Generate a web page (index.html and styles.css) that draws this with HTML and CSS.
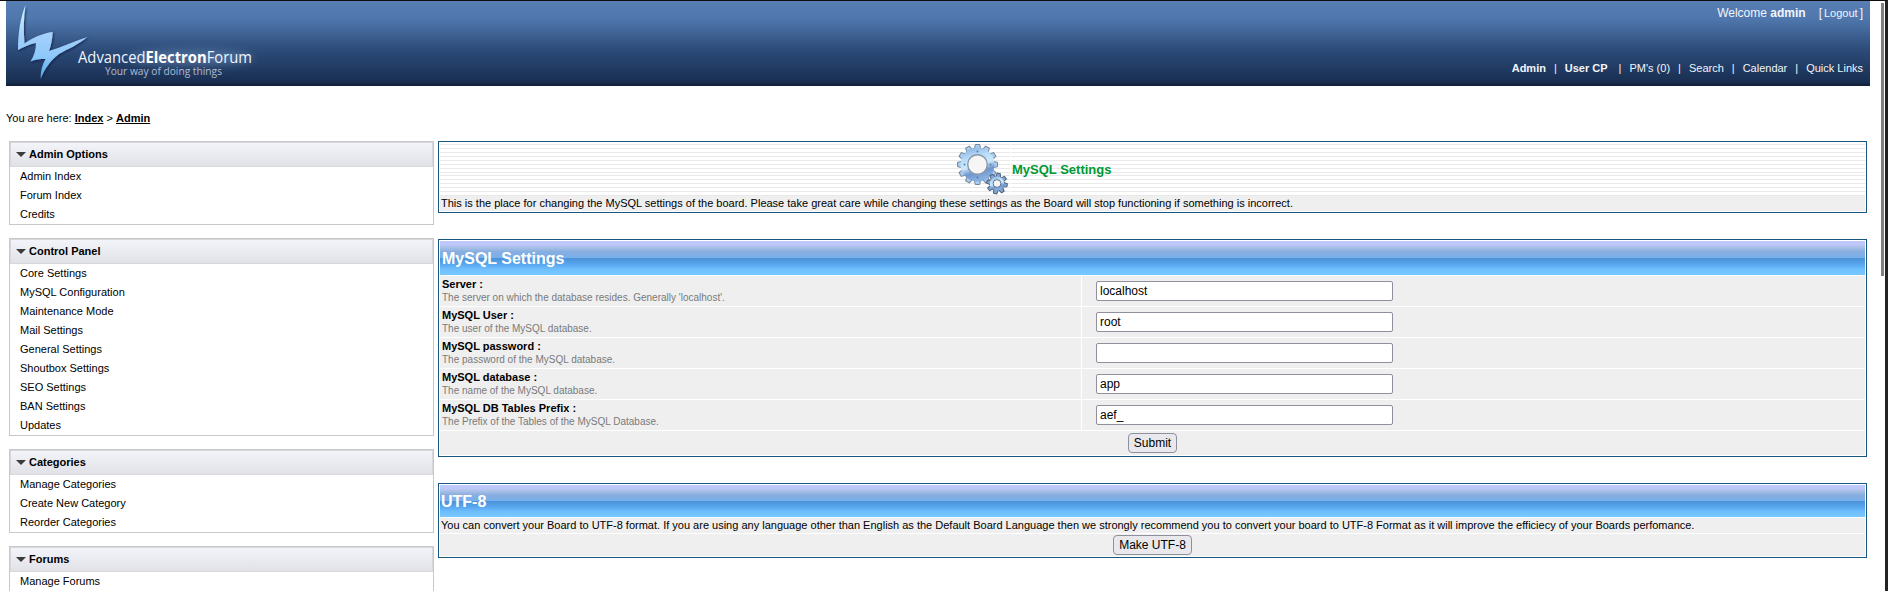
FILE: index.html
```html
<!DOCTYPE html>
<html lang="en">
<head>
<meta charset="utf-8">
<title>MySQL Settings</title>
<link rel="stylesheet" href="styles.css">
</head>
<body>
<div class="page">
<header class="header">
  <svg class="logo" width="260" height="85" viewBox="0 0 260 85">
    <defs>
      <linearGradient id="bolt" x1="0" y1="0" x2="0" y2="1"><stop offset="0" stop-color="#c9ffff"/><stop offset=".4" stop-color="#a5d0fb"/><stop offset=".7" stop-color="#8cc8fa"/><stop offset="1" stop-color="#55a5e6"/></linearGradient>
      <linearGradient id="fade" x1="0" y1="0" x2="0" y2="1"><stop offset="0" stop-color="#fff"/><stop offset="1" stop-color="#000"/></linearGradient>
      <mask id="fademask"><rect x="70" y="63" width="182" height="9" fill="url(#fade)"/></mask>
      <filter id="shade" x="-20%" y="-20%" width="140%" height="140%"><feDropShadow dx="1" dy="1" stdDeviation="1" flood-color="#0a1c40" flood-opacity=".8"/></filter>
      <filter id="glow" x="-10%" y="-100%" width="120%" height="300%"><feGaussianBlur stdDeviation="4"/></filter>
    </defs>
    <path filter="url(#shade)" fill="url(#bolt)" d="M19.500 5C14 19 12 34 12 50C18 47 24 44 30 43C30 50 28 56 24.500 61.500C29 59.500 34 59 39.500 59C36 65 34.500 72 34.700 79C38 70 44 61 53 54C62 49 72 45 81.500 37C69 41 56 47 43 51C45 46 46.500 39 46.700 32C37 33 26 38 18.500 43.500C17.500 30 17.500 18 19.500 5Z"/>
    <ellipse cx="185" cy="58" rx="62" ry="8" fill="#9fc3ee" opacity=".3" filter="url(#glow)"/>
    <text class="logo-name" x="72" y="63" textLength="174" lengthAdjust="spacingAndGlyphs">Advanced<tspan class="logo-bold">Electron</tspan>Forum</text>
    <path d="M76 67.500H246" stroke="#fff" stroke-opacity=".22" stroke-width="7" stroke-dasharray="1.500 3.500 1.500 5" mask="url(#fademask)"/>
    <text class="logo-tag" x="99" y="75" textLength="117" lengthAdjust="spacingAndGlyphs">Your way of doing things</text>
  </svg>
  <div class="account">
    <div class="welcome">Welcome <b>admin</b><span class="logout">[<a>Logout</a>]</span></div>
    <nav class="topnav"><b>Admin</b><i>|</i><b>User CP</b><i class="wide">|</i><span>PM's (0)</span><i>|</i><span>Search</span><i>|</i><span>Calendar</span><i>|</i><span>Quick Links</span></nav>
  </div>
</header>
<div class="crumbs">You are here: <b>Index</b> &gt; <b>Admin</b></div>
<div class="columns">
  <aside class="side">
    <section class="menu"><h3>Admin Options</h3><ul><li>Admin Index</li><li>Forum Index</li><li>Credits</li></ul></section>
    <section class="menu"><h3>Control Panel</h3><ul><li>Core Settings</li><li>MySQL Configuration</li><li>Maintenance Mode</li><li>Mail Settings</li><li>General Settings</li><li>Shoutbox Settings</li><li>SEO Settings</li><li>BAN Settings</li><li>Updates</li></ul></section>
    <section class="menu"><h3>Categories</h3><ul><li>Manage Categories</li><li>Create New Category</li><li>Reorder Categories</li></ul></section>
    <section class="menu last"><h3>Forums</h3><ul><li>Manage Forums</li></ul></section>
  </aside>
  <main class="main">
    <section class="panel intro">
      <div class="banner">
        <div class="banner-icon">
        <svg width="54" height="53" viewBox="0 0 54 53">
          <defs>
            <linearGradient id="steel" x1="0" y1="0" x2=".3" y2="1"><stop offset="0" stop-color="#7fa6d8"/><stop offset=".35" stop-color="#b5dafa"/><stop offset=".6" stop-color="#cdeafd"/><stop offset=".8" stop-color="#6f97d0"/><stop offset="1" stop-color="#86aee0"/></linearGradient>
            <path id="tooth" d="M-3.200 -15L-2.200 -20H2.200L3.200 -15Z"/>
            <path id="cog" d="M-2.400 -6L-1.600 -10.300H1.600L2.400 -6Z"/>
          </defs>
          <g transform="translate(21.500 21.500)" fill="#a9cdf0" stroke="#75879c" stroke-width="1">
            <use href="#tooth"/><use href="#tooth" transform="rotate(30)"/><use href="#tooth" transform="rotate(60)"/><use href="#tooth" transform="rotate(90)"/><use href="#tooth" transform="rotate(120)"/><use href="#tooth" transform="rotate(150)"/><use href="#tooth" transform="rotate(180)"/><use href="#tooth" transform="rotate(210)"/><use href="#tooth" transform="rotate(240)"/><use href="#tooth" transform="rotate(270)"/><use href="#tooth" transform="rotate(300)"/><use href="#tooth" transform="rotate(330)"/>
            <path fill="url(#steel)" stroke="none" fill-rule="evenodd" d="M-17 0A17 17 0 1 1 17 0A17 17 0 1 1 -17 0ZM-9.500 0A9.500 9.500 0 1 0 9.500 0A9.500 9.500 0 1 0 -9.500 0Z"/>
            <circle r="9.800" fill="#f6f6f6" stroke="#8b98a6" stroke-width="1.400"/>
            <g fill="#5e7896" stroke="none"><circle cy="-13" r=".9"/><circle cy="13" r=".9"/><circle cx="-13" r=".9"/><circle cx="13" r=".9"/></g>
          </g>
          <g transform="translate(41 40.500)" fill="#7da4d4" stroke="#4f6379" stroke-width="1">
            <use href="#cog" transform="rotate(10)"/><use href="#cog" transform="rotate(55)"/><use href="#cog" transform="rotate(100)"/><use href="#cog" transform="rotate(145)"/><use href="#cog" transform="rotate(190)"/><use href="#cog" transform="rotate(235)"/><use href="#cog" transform="rotate(280)"/><use href="#cog" transform="rotate(325)"/>
            <circle r="7.200" fill="url(#steel)" stroke="none"/>
            <circle r="3.900" fill="#f6f6f6" stroke="#5d7087"/>
          </g>
        </svg>
        </div>
        <div class="banner-title">MySQL Settings</div>
      </div>
      <p class="note">This is the place for changing the MySQL settings of the board. Please take great care while changing these settings as the Board will stop functioning if something is incorrect.</p>
    </section>
    <section class="panel settings">
      <h2>MySQL Settings</h2>
      <div class="row"><div class="label"><b>Server :</b><small>The server on which the database resides. Generally 'localhost'.</small></div><div class="field"><input type="text" value="localhost"></div></div>
      <div class="row"><div class="label"><b>MySQL User :</b><small>The user of the MySQL database.</small></div><div class="field"><input type="text" value="root"></div></div>
      <div class="row"><div class="label"><b>MySQL password :</b><small>The password of the MySQL database.</small></div><div class="field"><input type="text" value=""></div></div>
      <div class="row"><div class="label"><b>MySQL database :</b><small>The name of the MySQL database.</small></div><div class="field"><input type="text" value="app"></div></div>
      <div class="row"><div class="label"><b>MySQL DB Tables Prefix :</b><small>The Prefix of the Tables of the MySQL Database.</small></div><div class="field"><input type="text" value="aef_"></div></div>
      <div class="actions"><button class="submit">Submit</button></div>
    </section>
    <section class="panel utf">
      <h2>UTF-8</h2>
      <p class="note">You can convert your Board to UTF-8 format. If you are using any language other than English as the Default Board Language then we strongly recommend you to convert your board to UTF-8 Format as it will improve the efficiecy of your Boards perfomance.</p>
      <div class="actions"><button class="convert">Make UTF-8</button></div>
    </section>
  </main>
</div>
</div>
<div class="scroll"><div class="thumb"></div></div>
</body>
</html>
```
FILE: styles.css
```css
* { box-sizing: border-box; }
body { margin: 0; height: 591px; overflow: hidden; display: flex; background: #fff; border-top: 1px solid #0d0d12; border-right: 3px solid #232323; font: 11px/13px "Liberation Sans", Arial, sans-serif; color: #000; }
.page { flex: 1; padding-left: 6px; min-width: 0; }
.scroll { width: 15px; padding: 2px 1px 0 11px; }
.thumb { height: 273px; background: #7f8280; }
.header { height: 85px; display: flex; justify-content: space-between; background: linear-gradient(#587fb4 0, #4f77ad 18px, #2b4a77 50px, #1c3358 76px, #1a2f51 81px, #0e1c36 85px); color: #f2f5fa; }
.logo { overflow: visible; margin-top: -1px; }
.logo-name { font: 16px "Open Sans", sans-serif; fill: #eef5ff; }
.logo-bold { font-weight: 700; fill: #fff; }
.logo-tag { font: 11px "Open Sans", sans-serif; fill: #aebdd3; }
.account { display: flex; flex-direction: column; justify-content: space-between; align-items: flex-end; padding: 5px 7px 11px 0; }
.welcome { font-size: 12px; line-height: 14px; white-space: pre; }
.welcome a { font-size: 11px; padding: 0 2px; }
.logout { margin-left: 13px; }
.topnav { display: flex; }
.topnav i { font-style: normal; margin: 0 8px; }
.topnav .wide { margin-left: 11px; }
.crumbs { height: 55px; padding-top: 26px; }
.crumbs b { text-decoration: underline; }
.columns { display: flex; gap: 4px; padding-left: 3px; }
.side { width: 425px; display: flex; flex-direction: column; gap: 13px; }
.menu { border: 1px solid #c8c8c8; }
.menu h3 { margin: 0; height: 25px; padding: 0 0 1px 5px; border: 1px solid #d8d8da; display: flex; align-items: center; gap: 3px; font-size: 11px; background: linear-gradient(#f3f4f9, #e1e2e7); }
.menu h3::before { content: ""; margin-top: 1px; border: 5px solid transparent; border-top-color: #3b3b3b; border-bottom: 0; }
.menu ul { list-style: none; margin: 0; padding: 0 0 0 10px; }
.menu li { height: 19px; line-height: 18px; }
.menu.last { border-bottom: 0; }
.main { width: 1429px; display: flex; flex-direction: column; gap: 26px; }
.panel { border: 1px solid #175680; padding: 1px; display: flex; flex-direction: column; gap: 1px; }
.banner { height: 52px; display: grid; grid-template-columns: 570px 1fr; gap: 1px; color: #009933; font-weight: bold; font-size: 13px; }
.banner-icon, .banner-title { display: flex; align-items: center; background: repeating-linear-gradient(#fff 0 1px, #e9e9e9 1px 2px, #fff 2px 4px) 0 0 / 100% 31px; }
.banner-icon { justify-content: flex-end; }
.banner-title { padding-left: 1px; }
.note { margin: 0; height: 15px; padding: 0 1px; line-height: 15px; background: #efefef; white-space: nowrap; }
.panel h2 { margin: 0; height: 34px; line-height: 35px; padding-left: 2px; font-size: 16px; color: #fff; background: linear-gradient(#bfc8fa 0 10%, #a6bfe6 20%, #86ade0 32%, #79b0ec 49%, #4b91d6 50%, #58a6ee 68%, #70c0ff 84%, #78c8ff); }
.utf h2 { height: 32px; line-height: 33px; padding-left: 1px; }
.row { height: 30px; display: grid; grid-template-columns: 641px 1fr; gap: 1px; }
.label, .field { background: #efefef; }
.label { padding: 2px; }
.label b, .label small { display: block; line-height: 13px; }
.label small { font-size: 10px; color: #7a7a7a; }
.field { padding: 5px 14px; }
input { display: block; width: 297px; height: 20px; margin: 0; padding: 0 3px; border: 1px solid #8f8f9d; border-radius: 2px; font: 12px "Liberation Sans", Arial, sans-serif; color: #000; background: #fff; }
.actions { height: 24px; display: flex; justify-content: center; align-items: center; background: #efefef; }
.utf .actions { height: 22px; }
button { height: 20px; margin: 0; padding: 0; border: 1px solid #8f8f9d; border-radius: 4px; background: #e9e9ed; font: 12px "Liberation Sans", Arial, sans-serif; color: #000; }
.submit { width: 49px; }
.convert { width: 79px; }
```
